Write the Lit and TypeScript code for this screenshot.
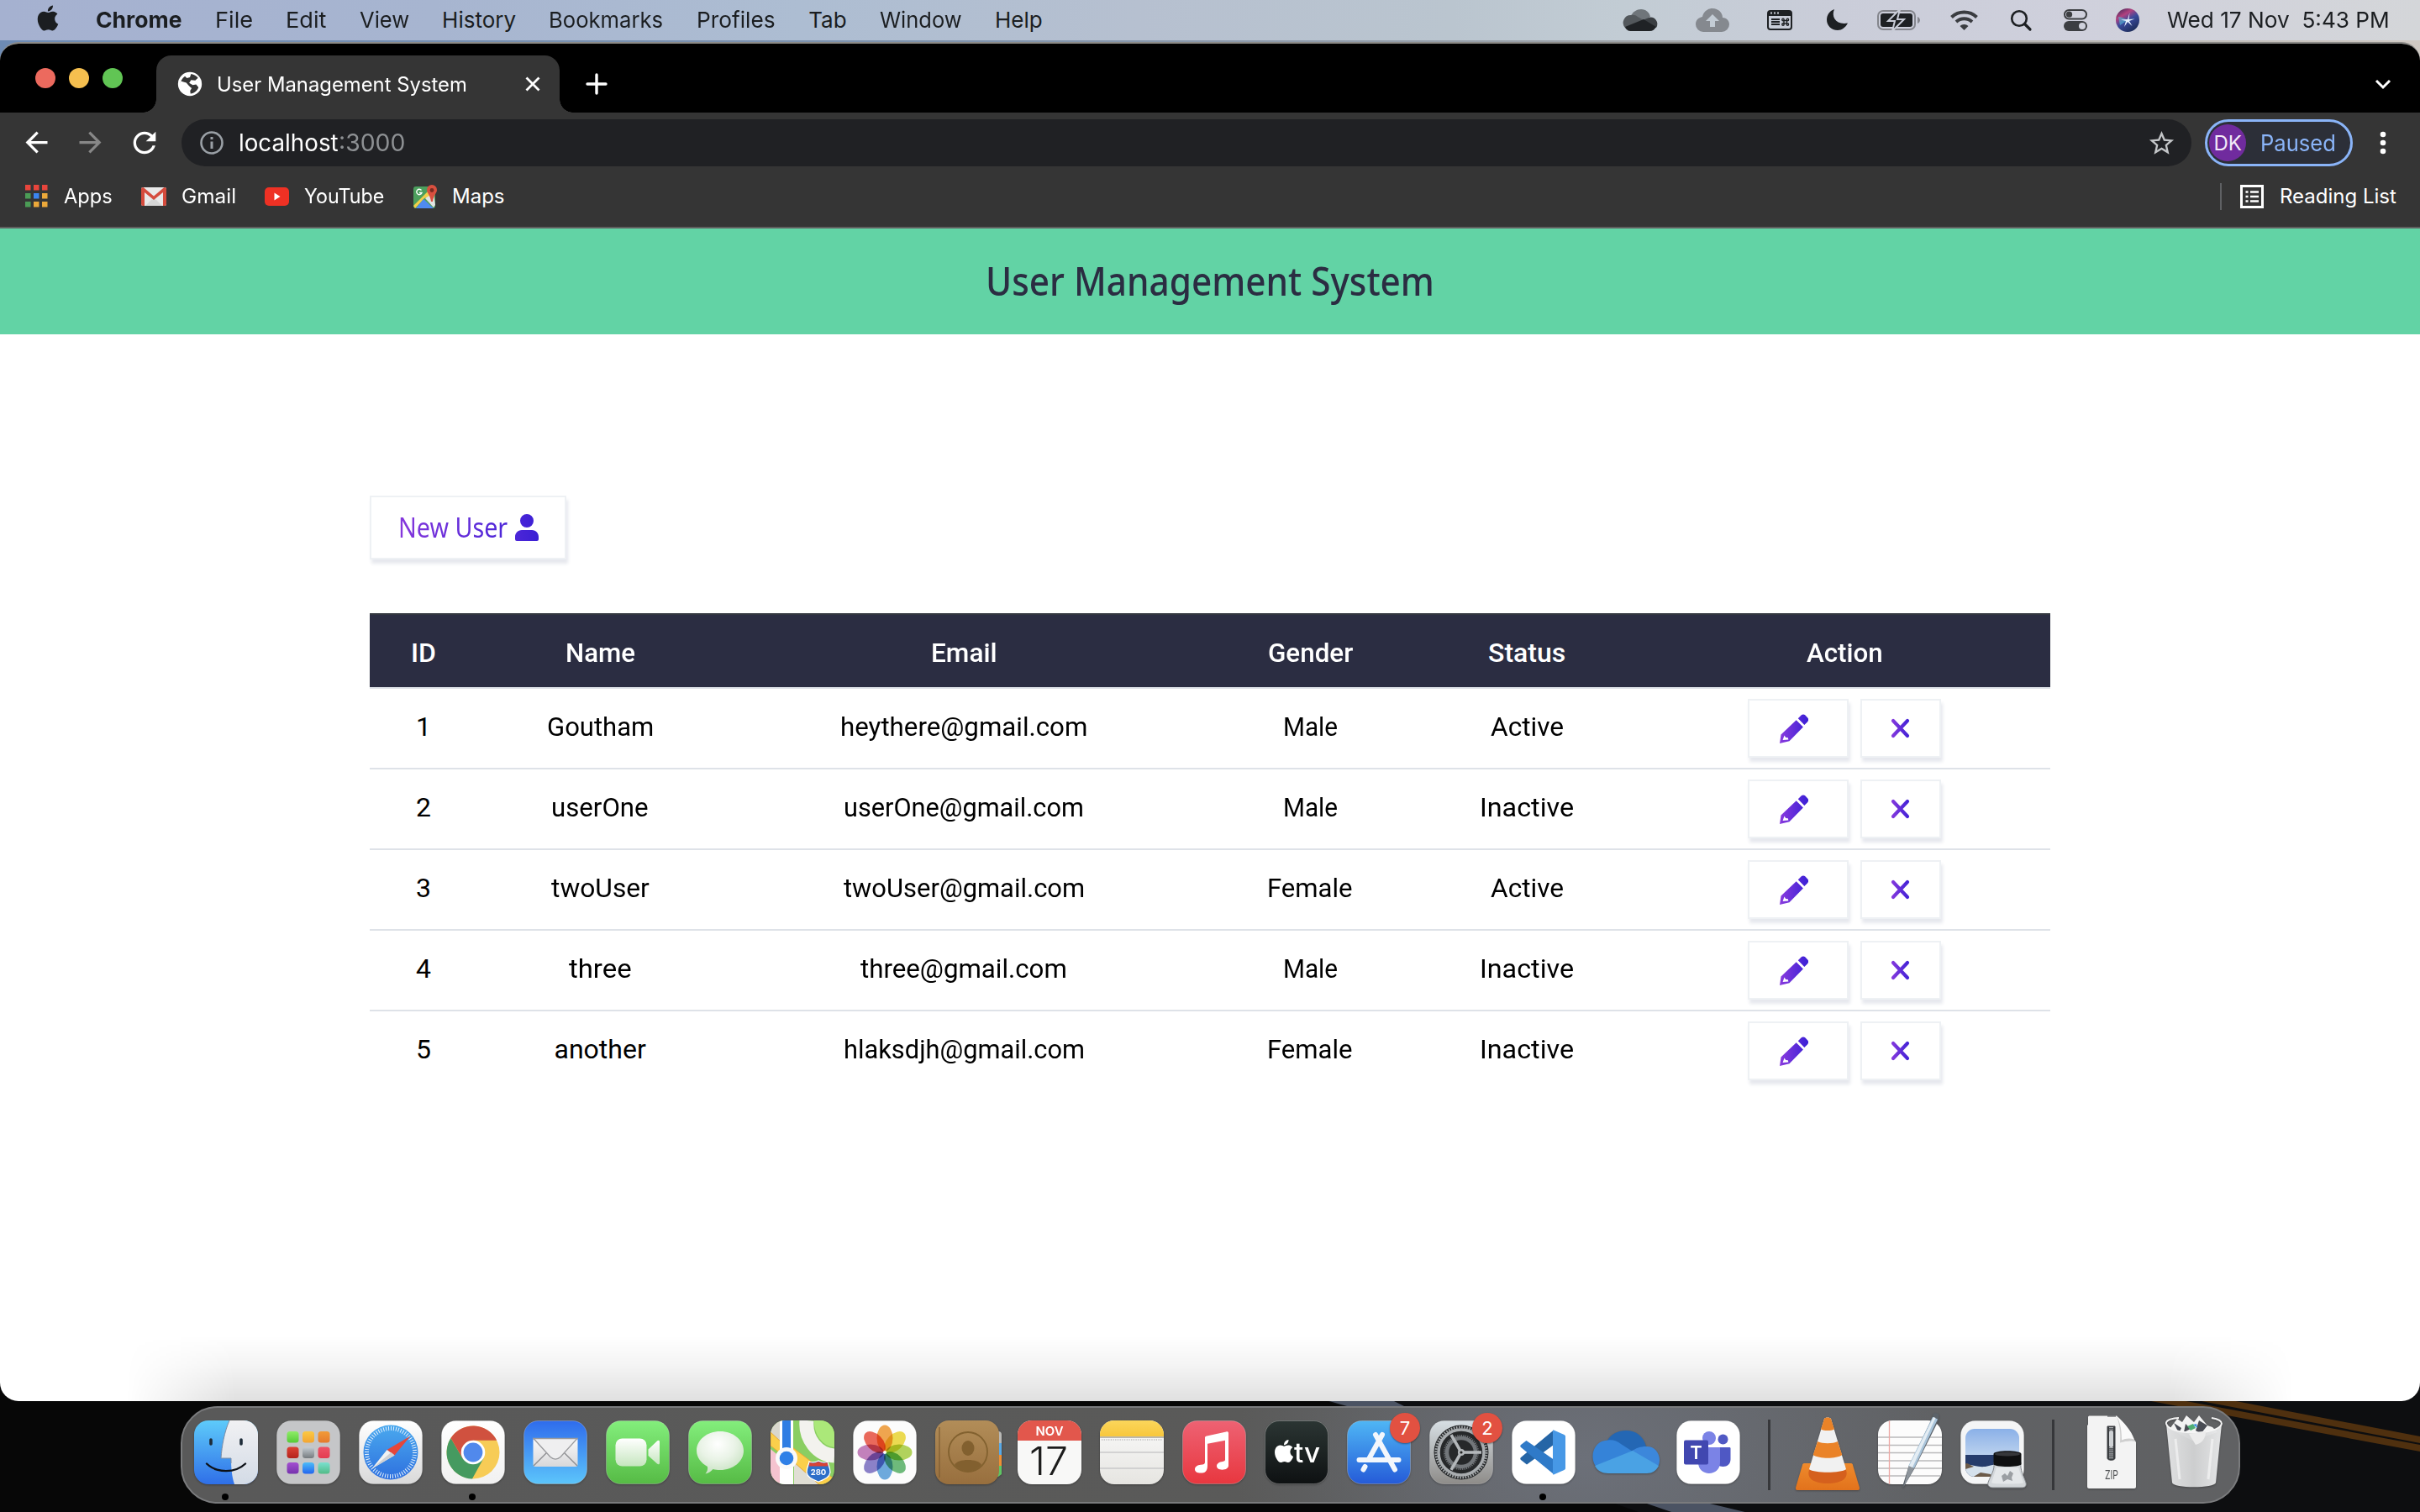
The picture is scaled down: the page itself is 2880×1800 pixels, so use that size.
import { LitElement, html, svg, css } from "lit";
import { customElement, property } from "lit/decorators.js";

/* Text scaled horizontally so that it fills exactly the given width. */
@customElement("fit-text")
class FitText extends LitElement {
  @property({ type: Number }) w = 0;
  static styles = css`
    :host { display: inline-block; white-space: pre; flex: none; text-align: left; }
    span { display: inline-block; transform-origin: 0 50%; }
  `;
  render() {
    return html`<span part="t"><slot @slotchange=${this.fit}></slot></span>`;
  }
  fit = () => {
    const t = this.renderRoot.querySelector("span") as HTMLElement;
    if (!this.w || !t) return;
    this.style.width = this.w + "px";
    const natural = t.offsetWidth;
    if (natural) t.style.transform = `scaleX(${this.w / natural})`;
  };
  firstUpdated() {
    this.fit();
    document.fonts.ready.then(this.fit);
  }
}

const applePath = svg`<path d="M12.152 6.896c-.948 0-2.415-1.078-3.96-1.04-2.04.027-3.91 1.183-4.961 3.014-2.117 3.675-.546 9.103 1.519 12.09 1.013 1.454 2.208 3.09 3.792 3.039 1.52-.065 2.09-.987 3.935-.987 1.831 0 2.35.987 3.96.948 1.637-.026 2.676-1.48 3.676-2.948 1.156-1.688 1.636-3.325 1.662-3.415-.039-.013-3.182-1.221-3.22-4.857-.026-3.04 2.48-4.494 2.597-4.559-1.429-2.09-3.623-2.324-4.39-2.376-2-.156-3.675 1.09-4.61 1.09zM15.53 3.83c.843-1.012 1.4-2.427 1.245-3.83-1.207.052-2.662.805-3.532 1.818-.78.896-1.454 2.338-1.273 3.714 1.338.104 2.715-.688 3.559-1.701"/>`;

/* ---------- macOS menu bar ---------- */
@customElement("menu-bar")
class MenuBar extends LitElement {
  static styles = css`
    :host { display: flex; height: 48px; line-height: 48px; font: 400 26px/48px Inter, "Liberation Sans", sans-serif; color: #1b1e21;
      background: linear-gradient(90deg, #a5b1d0 0%, #a7b5d0 18%, #adbdd2 33%, #b6c0d0 47%, #bac5cf 60%, #c2ccd4 67%, #cacdd9 76%, #cfd0dc 86%, #d4d6d9 100%); }
    svg { display: block; overflow: visible; }
    .apple { padding: 6px 41.5px 0 42px; }
    .menus { display: flex; gap: 39.4px; flex: 1; }
    .bold { font-weight: 700; }
    .tray { display: grid; align-items: center; height: 48px; padding-right: 36px;
      grid-template-columns: 86px 85px 71px 60px 87px 72px 63px 62px 61px auto; }
  `;
  render() {
    const menus: [string, number][] = [["File", 45], ["Edit", 48], ["View", 59], ["History", 88], ["Bookmarks", 136], ["Profiles", 94], ["Tab", 45], ["Window", 98], ["Help", 57]];
    return html`
      <div class="apple"><svg width="30" height="31" viewBox="0 0 24 24" fill="#1b1e21">${applePath}</svg></div>
      <div class="menus">
        <fit-text class="bold" .w=${103}>Chrome</fit-text>
        ${menus.map(([t, w]) => html`<fit-text .w=${w}>${t}</fit-text>`)}
      </div>
      <div class="tray">
        <svg width="40" height="26" viewBox="0 0 40 26">
          <path d="M9 8C11 3 16 0 21 0c6 0 10 4 11 9l-9 5z" fill="#6f757a"/>
          <path d="M9 26a9 9 0 0 1-7-4 9 9 0 0 1 7-15c3-.5 6 0 8 2l7 4-20 11z" fill="#53585c"/>
          <path d="M30 10a8 8 0 0 1 9 12l-16-9z" fill="#3a3e42"/>
          <path d="M2 21l22-9 15 9c-2 3-4 5-8 5H10c-4 0-6-1-8-5z" fill="#1f2225"/>
        </svg>
        <svg width="40" height="28" viewBox="0 0 40 28">
          <path d="M9 28A9 9 0 0 1 0 19c0-5 3-8 8-9C9 4 14 0 20 0c7 0 12 5 12 11 5 0 8 4 8 8a9 9 0 0 1-9 9z" fill="#85898f"/>
          <path d="M20 7l8 8h-5v7h-6v-7h-5z" fill="#c3ccd5"/>
        </svg>
        <svg width="30" height="24" viewBox="0 0 30 24">
          <rect x="1" y="1" width="28" height="22" rx="3" fill="none" stroke="#1e2124" stroke-width="2"/>
          <path d="M1 2h28v5H1z" fill="#1e2124"/>
          <path d="M4 3.5h2M8 3.5h2M12 3.5h2" stroke="#cbd0d8" stroke-width="2"/>
          <path d="M5 11h10M5 14h10M5 17h10" stroke="#1e2124" stroke-width="1.8"/>
          <g fill="none" stroke="#1e2124" stroke-width="1.4"><rect x="20" y="12.5" width="3.4" height="3.4"/><circle cx="19" cy="11.5" r="1.2"/><circle cx="24.4" cy="11.5" r="1.2"/><circle cx="19" cy="17" r="1.2"/><circle cx="24.4" cy="17" r="1.2"/></g>
        </svg>
        <svg width="26" height="26" viewBox="0 0 26 26"><path d="M9 0C5 9 11 19 25 16.500 22 22 18 25 13 25 5 25 0 19 0 12.500 0 7 3 2 9 0z" fill="#1d2023"/></svg>
        <svg width="51" height="24" viewBox="0 0 51 24">
          <rect x="1" y="1" width="44" height="22" rx="6" fill="none" stroke="#84868d" stroke-width="2"/>
          <rect x="4" y="4" width="38" height="16" rx="3" fill="#1d2023"/>
          <path d="M48 8c2 1 3 2.500 3 4s-1 3-3 4z" fill="#84868d"/>
          <path d="M27-1L13 13h8l-3 12 14-14h-8z" fill="#1d2023" stroke="#c8ccd7" stroke-width="2"/>
        </svg>
        <svg width="33" height="24" viewBox="0 0 33 24" fill="none" stroke-linecap="butt">
          <path d="M1.500 8.500a22 22 0 0 1 30 0" stroke="#3a3c40" stroke-width="4"/>
          <path d="M7 14a14 14 0 0 1 19 0" stroke="#3a3c40" stroke-width="4"/>
          <path d="M16.500 24l-5-5a7 7 0 0 1 10 0z" fill="#3a3c40"/>
        </svg>
        <svg width="24" height="24" viewBox="0 0 24 24" fill="none" stroke="#1d2023" stroke-width="2.600" stroke-linecap="round"><circle cx="10" cy="10" r="8.800"/><path d="M16.500 16.500l6.500 6.500" stroke-width="3.200"/></svg>
        <svg width="28" height="26" viewBox="0 0 28 26">
          <rect x="1" y="1" width="26" height="10.500" rx="5.200" fill="none" stroke="#3c3e42" stroke-width="2"/><circle cx="6.500" cy="6.200" r="3.600" fill="#3c3e42"/>
          <rect x="0" y="14" width="28" height="12" rx="6" fill="#3c3e42"/><circle cx="22" cy="20" r="4" fill="#cfd1dc"/>
        </svg>
        <svg width="28" height="28" viewBox="0 0 28 28">
          <defs><linearGradient id="si" x1="0" y1="0" x2=".6" y2="1"><stop offset="0" stop-color="#2b2350"/><stop offset=".35" stop-color="#b1417f"/><stop offset=".6" stop-color="#3a4a9c"/><stop offset="1" stop-color="#1f2f5e"/></linearGradient></defs>
          <circle cx="14" cy="14" r="14" fill="url(#si)"/>
          <path d="M3 10c4 0 7 2 11 4l-9 6z" fill="#4cc4e0" opacity=".55"/><path d="M14 13L16.500 5l-1 8 7-.5-6.500 2.500 3.500 6-5.500-5-4 6 2-7-6-1.500z" fill="#e8f3ff"/>
        </svg>
        <fit-text .w=${265}>Wed 17 Nov  5:43 PM</fit-text>
      </div>`;
  }
}

/* ---------- Chrome tab strip, toolbar, bookmarks ---------- */
@customElement("browser-chrome")
class BrowserChrome extends LitElement {
  static styles = css`
    :host { display: block; font-family: Inter, "Liberation Sans", sans-serif; color: #fff; }
    svg { display: block; flex: none; overflow: visible; }
    .strip { height: 82px; background: #000; display: flex; align-items: flex-end; }
    .lights { display: flex; gap: 16px; padding: 0 40px 29px 42px; }
    .lights i { width: 24px; height: 24px; border-radius: 50%; }
    .r { background: #ec6a5e; } .y { background: #f5bf4f; } .g { background: #61c554; }
    .tab { position: relative; width: 480px; height: 68px; background: #353535; border-radius: 18px 18px 0 0; display: flex; align-items: center; box-sizing: border-box; padding: 0 23px 0 23px; font-size: 24px; }
    .tab::before, .tab::after { content: ""; position: absolute; bottom: 0; width: 16px; height: 16px; }
    .tab::before { left: -16px; background: radial-gradient(circle at 0 0, #000 15.500px, #353535 16px); }
    .tab::after { right: -16px; background: radial-gradient(circle at 100% 0, #000 15.500px, #353535 16px); }
    .tab fit-text { margin: 0 auto 0 15px; }
    .plus { margin: 0 auto 22px 32px; }
    .down { margin: 0 35px 29px 0; }
    .tools { height: 72px; background: #353535; display: flex; align-items: center; }
    .nav { display: flex; gap: 25px; padding-left: 24px; width: 192px; }
    .omni { width: 2392px; height: 56px; border-radius: 28px; background: #202124; display: flex; align-items: center; box-sizing: border-box; padding: 0 18px 0 22px; font-size: 28px; }
    .omni .url { margin-left: 18px; }
    .omni .port { color: #8d9093; margin-right: auto; }
    .pill { margin-left: 16px; width: 176px; height: 56px; box-sizing: border-box; border: 3px solid #8ab4f8; border-radius: 28px; background: #2c2f38; display: flex; align-items: center; padding-left: 2px; color: #8ab4f8; font-size: 27px; }
    .avatar { width: 44px; height: 44px; border-radius: 50%; background: #702b9e; color: #f3eaf8; display: flex; align-items: center; justify-content: center; font-size: 24px; margin-right: 17px; }
    .dots { margin-left: 33px; }
    .marks { height: 66px; box-sizing: border-box; padding: 0 28px 9px 30px; background: #353535; border-bottom: 2px solid #5f5f5f; display: flex; align-items: center; font-size: 24px; }
    .m { display: flex; align-items: center; }
    .m1 { gap: 19px; width: 138px; } .m2 { gap: 18px; width: 147px; } .m3 { gap: 18px; width: 177px; } .m4 { gap: 18px; }
    .sep { width: 2px; height: 32px; background: #5f6164; margin: 0 22px 0 auto; }
    .rl { gap: 19px; }
  `;
  render() {
    const c = ["#e8453c", "#e8453c", "#e8453c", "#4b9c56", "#3b85f1", "#eba83a", "#4b9c56", "#eba83a", "#eba83a"];
    return html`
      <div class="strip">
        <div class="lights"><i class="r"></i><i class="y"></i><i class="g"></i></div>
        <div class="tab">
          <svg width="34" height="34" viewBox="0 0 24 24"><circle cx="12" cy="12" r="10" fill="#fff"/><path d="M13 3.500c2.500.5 4.500 1.600 5.800 3.300L16.500 9 13 8.600l-1.600 2.600 3 1.600 2.800-.4 2 2.400c-1 2.700-3.400 5-6.700 5.400l-.3-2.600 1.300-2-2-1.600-3.700-.1L4 11c.6-2 1.700-4 3.800-5.500L9.500 7l2.500-.6z" fill="#353535"/><path d="M4.200 9.600L9 11l3 3.500-1 5.300C6 19.500 3 15 4.200 9.600z" fill="#fff"/></svg>
          <fit-text .w=${298}>User Management System</fit-text>
          <svg width="18" height="18" viewBox="0 0 18 18" stroke="#fff" stroke-width="2.800"><path d="M1.500 1.500l15 15M16.500 1.500l-15 15"/></svg>
        </div>
        <svg class="plus" width="24" height="24" viewBox="0 0 24 24" stroke="#fff" stroke-width="3.400" stroke-linecap="round"><path d="M12 1v22M1 12h22"/></svg>
        <svg class="down" width="18" height="10" viewBox="0 0 18 10" fill="none" stroke="#fff" stroke-width="3"><path d="M1 1l8 8 8-8"/></svg>
      </div>
      <div class="tools">
        <div class="nav">
          <svg width="39" height="39" viewBox="0 0 24 24" fill="#fff"><path d="M20 11H7.830l5.590-5.590L12 4l-8 8 8 8 1.410-1.410L7.830 13H20z"/></svg>
          <svg width="39" height="39" viewBox="0 0 24 24" fill="#878787"><path d="M12 4l-1.410 1.410L16.170 11H4v2h12.170l-5.580 5.590L12 20l8-8z"/></svg>
          <svg width="40" height="40" viewBox="0 0 24 24" fill="#fff"><path d="M17.650 6.350C16.200 4.900 14.210 4 12 4c-4.420 0-7.990 3.580-7.990 8s3.570 8 7.990 8c3.730 0 6.840-2.550 7.730-6h-2.080c-.82 2.330-3.040 4-5.650 4-3.310 0-6-2.690-6-6s2.690-6 6-6c1.660 0 3.140.69 4.220 1.780L13 11h7V4z"/></svg>
        </div>
        <div class="omni">
          <svg width="28" height="28" viewBox="0 0 28 28"><circle cx="14" cy="14" r="12.500" fill="none" stroke="#9aa0a6" stroke-width="2.600"/><path d="M14 12.500V21M14 7v3" stroke="#9aa0a6" stroke-width="3"/></svg>
          <fit-text class="url" .w=${119}>localhost</fit-text><fit-text class="port" .w=${79}>:3000</fit-text>
          <svg width="35" height="35" viewBox="0 0 24 24" fill="#c4c6c8"><path d="M22 9.240l-7.190-.62L12 2 9.190 8.630 2 9.240l5.460 4.730L5.820 21 12 17.270 18.180 21l-1.630-7.030zM12 15.400l-3.760 2.270 1-4.280-3.320-2.880 4.380-.38L12 6.100l1.710 4.040 4.380.38-3.320 2.880 1 4.280z"/></svg>
        </div>
        <div class="pill"><span class="avatar"><fit-text .w=${33}>DK</fit-text></span><fit-text .w=${90}>Paused</fit-text></div>
        <svg class="dots" width="6" height="28" viewBox="0 0 6 28" fill="#fff"><circle cx="3" cy="4" r="3.300"/><circle cx="3" cy="14" r="3.300"/><circle cx="3" cy="24" r="3.300"/></svg>
      </div>
      <div class="marks">
        <div class="m m1"><svg width="27" height="27" viewBox="0 0 27 27">${c.map((f, i) => svg`<rect x=${(i % 3) * 10} y=${Math.floor(i / 3) * 10} width="6.500" height="6.500" fill=${f}></rect>`)}</svg><fit-text .w=${58}>Apps</fit-text></div>
        <div class="m m2"><svg width="30" height="22" viewBox="0 0 30 22"><rect width="30" height="22" rx="2" fill="#e9e9e9"/><path d="M5 22l10-10 10 10z" fill="#d6d6d6"/><path d="M0 2a2 2 0 0 1 3.500-1.300L15 10.500 26.500.7A2 2 0 0 1 30 2v18a2 2 0 0 1-2 2h-2V6L15 15 4 6v16H2a2 2 0 0 1-2-2z" fill="#d54b3d"/></svg><fit-text .w=${65}>Gmail</fit-text></div>
        <div class="m m3"><svg width="29" height="22" viewBox="0 0 29 22"><rect width="29" height="22" rx="5" fill="#ee3124"/><path d="M11.500 6.500l7 4.500-7 4.500z" fill="#fff"/></svg><fit-text .w=${95}>YouTube</fit-text></div>
        <div class="m m4"><svg width="28" height="28" viewBox="0 0 28 28"><rect y="2" width="26" height="26" rx="3" fill="#4c9f5d"/><path d="M0 25L19 6l6 6-12 4L2 28z" fill="#f2cf4a"/><path d="M14 16l10-6 2 14-2 3z" fill="#e4e4e4"/><path d="M12 17l12 11H3z" fill="#4f8af0"/><path d="M22 0a6 6 0 0 1 6 6c0 4-4 6-5 14h-2C20 12 16 10 16 6a6 6 0 0 1 6-6z" fill="#d8503f"/><circle cx="22" cy="6.500" r="2.400" fill="#7a2a20"/><path d="M9.500 6.500a3.200 3.200 0 1 0 .5 3H7" fill="none" stroke="#fff" stroke-width="1.400"/></svg><fit-text .w=${63}>Maps</fit-text></div>
        <i class="sep"></i>
        <div class="m rl"><svg width="28" height="28" viewBox="0 0 28 28" fill="none" stroke="#fff"><rect x="1.500" y="1.500" width="25" height="25" stroke-width="3"/><path d="M6.500 8.500h3M6.500 14h3M6.500 19.500h3M12 8.500h10M12 14h10M12 19.500h10" stroke-width="2.400"/></svg><fit-text .w=${139}>Reading List</fit-text></div>
      </div>`;
  }
}

/* ---------- the web page ---------- */
interface User { id: number; name: string; email: string; gender: string; status: string; }
const users: User[] = [
  { id: 1, name: "Goutham", email: "heythere@gmail.com", gender: "Male", status: "Active" },
  { id: 2, name: "userOne", email: "userOne@gmail.com", gender: "Male", status: "Inactive" },
  { id: 3, name: "twoUser", email: "twoUser@gmail.com", gender: "Female", status: "Active" },
  { id: 4, name: "three", email: "three@gmail.com", gender: "Male", status: "Inactive" },
  { id: 5, name: "another", email: "hlaksdjh@gmail.com", gender: "Female", status: "Inactive" },
];
/* Advance widths of the table's words, in pixels. */
const widths: Record<string, number> = {
  Goutham: 127, userOne: 116, twoUser: 117, three: 75, another: 109,
  "heythere@gmail.com": 294, "userOne@gmail.com": 286, "twoUser@gmail.com": 287, "three@gmail.com": 246, "hlaksdjh@gmail.com": 287,
  Male: 65, Female: 102, Active: 87, Inactive: 112,
  ID: 30, Name: 83, Email: 79, Gender: 101, Status: 92, Action: 91,
};
const word = (t: string) => html`<fit-text .w=${widths[t] ?? 0}>${t}</fit-text>`;

@customElement("user-page")
class UserPage extends LitElement {
  static styles = css`
    :host { display: block; background: #fff; font: 400 32px/38px Roboto, "Liberation Sans", sans-serif; color: #000; }
    svg { display: block; flex: none; }
    header { height: 126px; box-sizing: border-box; padding-bottom: 3px; background: #62d3a5; display: flex; align-items: center; justify-content: center; font: 500 48px/60px "Noto Sans", "Open Sans", sans-serif; color: #2b2d42; }
    main { width: 2000px; margin: 0 auto; padding-top: 192px; }
    .btn { box-sizing: border-box; border: 2px solid #eef1f4; background: #fff; box-shadow: 2px 5px 4px #e6e8ee; display: flex; align-items: center; }
    .new { width: 234px; height: 76px; padding: 0 31px 0 32px; justify-content: space-between; font: 400 32px/40px "Noto Sans", "Open Sans", sans-serif; }
    .new fit-text::part(t) { background: linear-gradient(90deg, #8638dc, #4c26d8); -webkit-background-clip: text; background-clip: text; color: transparent; }
    .grid { margin-top: 64px; }
    .row { display: grid; grid-template-columns: 128px 292px 574px 250px 266px 490px; height: 96px; box-sizing: border-box; border-top: 2px solid #dee2e8; text-align: center; }
    .row > div { display: flex; align-items: center; justify-content: center; padding-bottom: 4px; }
    .head { height: 88px; border-top-color: #333740; background: #2b2d42; color: #fff; font-weight: 500; }
    .head > div { padding: 4px 0 0; }
    .row > .act { justify-content: flex-start; align-items: flex-start; padding: 12px 0 0 130px; gap: 14px; }
    .edit { width: 120px; height: 70px; padding-left: 36px; }
    .del { width: 96px; height: 70px; padding-left: 34px; }
  `;
  render() {
    return html`
      <header><fit-text .w=${534}>User Management System</fit-text></header>
      <main>
        <div class="btn new"><fit-text .w=${130}>New User</fit-text>
          <svg width="28" height="32" viewBox="0 0 28 32"><defs><linearGradient id="u"><stop stop-color="#4c26d8"/><stop offset="1" stop-color="#3a1fd4"/></linearGradient></defs><path d="M14 0a8 8 0 1 1 0 16 8 8 0 0 1 0-16zM8 19h12c5 0 8 4 8 8v3a2 2 0 0 1-2 2H2a2 2 0 0 1-2-2v-3c0-4 3-8 8-8z" fill="url(#u)"/></svg>
        </div>
        <div class="grid">
          <div class="row head">${["ID", "Name", "Email", "Gender", "Status", "Action"].map((h) => html`<div>${word(h)}</div>`)}</div>
          ${users.map((u) => html`<div class="row">
            <div>${u.id}</div><div>${word(u.name)}</div><div>${word(u.email)}</div><div>${word(u.gender)}</div><div>${word(u.status)}</div>
            <div class="act">
              <div class="btn edit"><svg width="34" height="35" viewBox="0 0 34 35"><defs><linearGradient id="p"><stop stop-color="#8a3bdd"/><stop offset="1" stop-color="#3a1fd6"/></linearGradient></defs><path d="M21.800 5.300L25.500 1.400a4 4 0 0 1 5 0L33 4.200a4 4 0 0 1 0 5.300L29.300 13zM19.700 7.200l8.200 8.200L11.500 32.200 0 35 1.500 24.500zM5.500 25.500L3.600 31l6.800-.6-.6-2.200-2.600-.2z" fill="url(#p)" fill-rule="evenodd"/></svg></div>
              <div class="btn del"><svg width="24" height="24" viewBox="0 0 24 24"><defs><linearGradient id="x" gradientUnits="userSpaceOnUse" x1="0" y1="0" x2="24" y2="0"><stop stop-color="#8a3bdd"/><stop offset="1" stop-color="#3a1fd6"/></linearGradient></defs><path d="M3 3l17 18M20 3L3 21" stroke="url(#x)" stroke-width="4.200" stroke-linecap="round"/></svg></div>
            </div>
          </div>`)}
        </div>
      </main>`;
  }
}

/* ---------- Dock ---------- */
const tile = (fill: string) => svg`<rect x=".5" y=".5" width="75" height="75" rx="17" fill=${fill} stroke="#fff" stroke-opacity=".25"/>`;
const grad = (id: string, a: string, b: string) => svg`<linearGradient id=${id} x1="0" y1="0" x2="0" y2="1"><stop stop-color=${a}></stop><stop offset="1" stop-color=${b}></stop></linearGradient>`;

const finder = svg`<defs>${grad("f1", "#5ecbfa", "#2f6fe8")}${grad("f2", "#f1f1f3", "#d3dbe6")}<clipPath id="fc"><rect width="76" height="76" rx="17"/></clipPath></defs>
  <g clip-path="url(#fc)"><rect width="76" height="76" fill="url(#f1)"/><path d="M42 0C36 14 33 30 32 45h12c0 12 1 22 4 31h28V0z" fill="url(#f2)"/></g>
  <path d="M42 0C36 14 33 30 32 45h12v6" fill="none" stroke="#7c8ea6" stroke-width="1"/>
  <path d="M20 23v5M56 23v5" stroke="#1d2b38" stroke-width="3.600" stroke-linecap="round"/><path d="M15 51.500c12 11.500 34 11.500 46 0" fill="none" stroke="#0d1117" stroke-width="2.400" stroke-linecap="round"/>`;
const padColors = [["#8fec68", "#55cb37"], ["#fbc944", "#f3a532"], ["#f19b38", "#e57a2e"], ["#dd4135", "#b4221b"], ["#c5cdd3", "#757a7e"], ["#ee5468", "#e33c50"], ["#a34fd0", "#7633ad"], ["#4dbcf8", "#2265ee"], ["#7be0cf", "#51bb87"]];
const launchpad = svg`<defs>${padColors.map((c, i) => grad("lp" + i, c[0], c[1]))}</defs>${tile("#c5c6c8")}
  ${padColors.map((_, i) => svg`<rect x=${12.500 + (i % 3) * 18.500} y=${13 + Math.floor(i / 3) * 18.500} width="14" height="13.500" rx="3.500" fill=${`url(#lp${i})`}></rect>`)}`;
const safari = svg`<defs>${grad("s0", "#fff", "#d9d9d9")}${grad("s1", "#4aa9ee", "#2e70df")}</defs>${tile("url(#s0)")}<circle cx="38" cy="38" r="32.500" fill="url(#s1)"/>
  <circle cx="38" cy="38" r="28.500" fill="none" stroke="#e4f1fd" stroke-width="5" stroke-dasharray="1 1.980"/>
  <path d="M61.500 18.500L42.500 41.500 33.500 35z" fill="#e5463a"/><path d="M15.500 57.500l18-22.500 9 6.500z" fill="#f2f2f2"/><path d="M15.500 57.500l23-19.500 4 3.500z" fill="#cfd0d3"/>`;
const chrome = svg`<defs>${grad("c0", "#fff", "#f1f1f1")}</defs>${tile("url(#c0)")}
  <circle cx="38" cy="38" r="31.500" fill="#f7cc56"/><path d="M11.500 21A31.500 31.500 0 0 0 37 69.500L50.400 45.200 38 38 25.600 45.200z" fill="#459a60"/><path d="M11.500 21A31.500 31.500 0 0 1 66.200 23.700H38L25.600 45.200z" fill="#d0513f"/>
  <circle cx="38" cy="38" r="14.300" fill="#fff"/><circle cx="38" cy="38" r="11.400" fill="#5189ec"/>`;
const mail = svg`<defs>${grad("m0", "#2f6cec", "#5cc5fb")}${grad("m1", "#fafafa", "#d8d8da")}</defs>${tile("url(#m0)")}
  <rect x="11.500" y="21" width="53" height="34" rx="2.500" fill="url(#m1)"/><path d="M12 54l17-17M64 54L47 37" stroke="#8c8d90" stroke-width="1.400"/><path d="M12 21.500l20 22c4 3.500 8 3.500 12 0l20-22z" fill="#efeff0" stroke="#9a9b9e" stroke-width="1.300"/>`;
const facetime = svg`<defs>${grad("t0", "#83ee7c", "#56bb45")}${grad("t1", "#fff", "#c6e6bf")}</defs>${tile("url(#t0)")}
  <rect x="11.500" y="21.500" width="37" height="33" rx="8" fill="url(#t1)"/><path d="M50.500 34.500L61 24.500c1.500-1.500 3-.8 3 1v25c0 1.800-1.500 2.500-3 1L50.500 42z" fill="url(#t1)"/>`;
const messages = svg`<defs><radialGradient id="g1" cx=".45" cy=".3" r=".75"><stop stop-color="#fff"/><stop offset=".5" stop-color="#e9f3e6"/><stop offset="1" stop-color="#c4e0bd"/></radialGradient></defs>${tile("url(#t0)")}
  <path d="M38 13c15.500 0 28 10 28 23S53.500 59 38 59c-3 0-6-.3-8.500-1-2 2.500-5.500 5-9 5.500 2-2.500 3-5 2.500-8.500C15.500 51 10 44 10 36c0-13 12.500-23 28-23z" fill="url(#g1)"/>`;
const maps = svg`<defs><clipPath id="mc"><rect width="76" height="76" rx="17"/></clipPath></defs><g clip-path="url(#mc)"><rect width="76" height="76" fill="#8ace62"/>
  <path d="M52 0a26 30 0 0 0 24 32V0z" fill="#abe879"/><path d="M43 0a35 38 0 0 0 33 42" fill="none" stroke="#f3f2ee" stroke-width="17"/><path d="M0 0h12v34L0 24z" fill="#d9d7cd"/><path d="M0 34l12 10v32H0z" fill="#f5c3cf"/><path d="M28 48l30 28H28z" fill="#e0ded4"/><path d="M0 14l13 12v14L0 30zM26 32l50 38v10H62L26 48z" fill="#fbcf4b" stroke="#e5a93a" stroke-width="1"/><rect x="11" width="16" height="76" fill="#fff"/><rect x="14" width="10" height="44" fill="#2f7de3"/></g>
  <circle cx="19" cy="45" r="13" fill="#fafafa"/><circle cx="19" cy="45" r="8.300" fill="#2f80e7"/><g><path d="M43 62c0-7 3-10 3-13 4 2 7 1 11-1 4 2 7 3 11 1 0 3 3 6 3 13-1 6-7 8-14 11-7-3-13-5-14-11z" fill="#2d6fc9" stroke="#fff" stroke-width="1.300"/><path d="M46.500 50c3.500 1.500 6.500.8 10.500-1 4 1.800 7 2.500 10.500 1l1 4.500h-23z" fill="#d94335"/><text x="57" y="65" text-anchor="middle" font-size="9.500" font-weight="700" fill="#fff">280</text></g>`;
const petals = ["#f19b37", "#ecd93a", "#a9cf46", "#5bb36a", "#5a9fdb", "#7d72c4", "#bd72b4", "#ea5545"];
const photos = svg`${tile("#fcfcfc")}${petals.map((c, i) => svg`<ellipse cx="38" cy="21" rx="9.500" ry="15.500" fill=${c} opacity=".88" style="mix-blend-mode:multiply" transform=${`rotate(${i * 45} 38 38)`}></ellipse>`)}<circle cx="38" cy="38" r="1.800" fill="#fff"/>`;
const contacts = svg`<defs>${grad("k0", "#b28d58", "#986f3e")}</defs><path d="M70 13h5a4 4 0 0 1 4 4v10h-9z" fill="#b9b9b6"/><path d="M70 27h9v14h-9z" fill="#58a9e6"/><path d="M70 41h9v13h-9z" fill="#ee8f34"/><path d="M70 54h9v10l-4 3h-5z" fill="#5fc563"/>
  <rect x="0" y="0" width="76" height="76" rx="16" fill="url(#k0)"/><path d="M5 8v60" stroke="#7d5c31" stroke-width="1.200"/><ellipse cx="39" cy="37.500" rx="23" ry="23.500" fill="none" stroke="#82612f" stroke-width="1.800"/><ellipse cx="39" cy="33" rx="7.500" ry="9" fill="#82602f"/><path d="M23 53c3-8 29-8 32 0-8 10-24 10-32 0z" fill="#82602f"/>`;
const calendar = svg`<defs><clipPath id="cc"><rect width="76" height="76" rx="17"/></clipPath></defs><g clip-path="url(#cc)"><rect width="76" height="76" fill="#f8f8f7"/><rect width="76" height="24" fill="#e2574c"/></g><text x="38" y="18" text-anchor="middle" font-size="15" font-weight="600" fill="#fff" textLength="33" lengthAdjust="spacingAndGlyphs">NOV</text><text x="37" y="64.500" text-anchor="middle" font-size="46" font-weight="300" fill="#1c1c1c" textLength="46" lengthAdjust="spacingAndGlyphs">17</text>`;
const notes = svg`<defs>${grad("n0", "#fbd65b", "#f8c73c")}${grad("n1", "#fafafa", "#e6e5e1")}<clipPath id="nc"><rect width="76" height="76" rx="17"/></clipPath></defs><g clip-path="url(#nc)"><rect width="76" height="76" fill="url(#n1)"/><rect width="76" height="19" fill="url(#n0)"/><path d="M0 20h76" stroke="#a9a494" stroke-width="1.600"/><path d="M0 38h76M0 57h76" stroke="#c9c9ca" stroke-width="1.300"/><path d="M2 23h72" stroke="#b9b9b9" stroke-width="1.600" stroke-dasharray="1.200 1.500"/></g>`;
const music = svg`<defs>${grad("u0", "#ee6273", "#e8373f")}</defs>${tile("url(#u0)")}<path d="M27 24.500c0-1.500.8-2.300 2.300-2.600l23-6.400c1.700-.3 2.700.5 2.700 2.200v48c0 4-3 6.500-7.500 6.500-4 0-6.500-2.200-6.500-5.500 0-4 3-6 7-6.700 2-.4 3-1 3-3V28.500l-21 5v32C30 74.500 27 77 22 77c-4.500 0-7-2-7-5.500 0-4 3-6 7-6.700 3.500-.7 5-1.500 5-4z" transform="translate(0 1) scale(1 .800)" fill="#fff"/>`;
const tv = svg`<defs>${grad("v0", "#2b3533", "#0e1112")}</defs>${tile("url(#v0)")}<g transform="translate(9.500 23) scale(1.130)" fill="#fff">${applePath}</g><text x="35" y="50" font-size="32" font-weight="500" fill="#fff" textLength="31" lengthAdjust="spacingAndGlyphs">tv</text>`;
const appstore = svg`<defs>${grad("a0", "#4fb6f5", "#255bd8")}</defs>${tile("url(#a0)")}<g stroke="#f3f7fc" stroke-width="6" stroke-linecap="round" fill="none"><path d="M34 17l23 41.500M42 17L26 46M21.500 55l-2 3.500M14.500 47h47"/></g>`;
const settings = svg`<defs>${grad("e0", "#d7dfe4", "#8e8c89")}</defs>${tile("url(#e0)")}<circle cx="38" cy="38" r="32.500" fill="#26282a"/><circle cx="38" cy="38" r="30" fill="none" stroke="#a4a8aa" stroke-width="3" stroke-dasharray="1.600 1.540"/><circle cx="38" cy="38" r="27" fill="none" stroke="#a9adb0" stroke-width="3.500"/><circle cx="38" cy="38" r="17" fill="none" stroke="#72767a" stroke-width="4.500"/><circle cx="38" cy="38" r="20" fill="none" stroke="#72767a" stroke-width="2" stroke-dasharray="1.200 1.200"/>
  <g stroke="#b3b7ba" stroke-width="3.600">${[0, 120, 240].map((a) => svg`<path d="M38 38h24" transform=${`rotate(${a} 38 38)`}></path>`)}</g><circle cx="38" cy="38" r="4" fill="#b3b7ba"/><circle cx="38" cy="38" r="1.600" fill="#222"/>`;
const vscode = svg`${tile("#fff")}<path d="M50 11.500L50 29 18 52.500l-7-5.500c-1-.8-1-2.200 0-3z" fill="#2565a6"/><path d="M50 64V46.500L17.500 24 11 29c-1 1-1 2 0 3z" fill="#2f7ac8"/><path d="M50 11.500l12.500 5.500c1 .5 1.500 1.300 1.500 2.300v37.500c0 1-.5 1.800-1.500 2.300L50 64.500c-.8 0-1-.5-1-1V12.500c0-.5.2-1 1-1z" fill="#4798e6"/>`;
const onedrive = svg`<path d="M16 24C20 16 29 12 38 12c12 0 21 7 24 19L44 42z" fill="#2467b4"/><path d="M1 53C-5 42 0 26 13 24c8-2 14 0 19 4l14 9-40 21z" fill="#3583d8"/><path d="M62 31c9-1 16 7 16 16 0 4-1 7-3 9L44 37c6-4 11-6 18-6z" fill="#3c87db"/><path d="M1 54l45-18 31 18c-3 6-8 9-14 9H17C10 63 4 60 1 54z" fill="#4aa2e4"/>`;
const teams = svg`${tile("#fff")}<circle cx="39" cy="21" r="8" fill="#7b83e6"/><circle cx="55.500" cy="22.500" r="6" fill="#5059c4"/><path d="M46 32h17c1 0 1.500.5 1.500 1.500V46c0 6-4 9-9 9s-9-3-9.500-9z" fill="#4f58c4"/><path d="M26 32h26v18c0 8-6 13-13 13s-13-5-13-13z" fill="#7b83e6"/><rect x="9" y="23.500" width="29" height="29" rx="2" fill="#4147b0"/><text x="23.500" y="46" text-anchor="middle" font-size="22" font-weight="600" fill="#fff">T</text>`;
const vlc = svg`<defs>${grad("w0", "#ee8a2c", "#e2721c")}</defs><path d="M8 53c0-1 1-2 2-2h56c1 0 2 1 2 2l8 27c0 2 0 3-2 3H2c-2 0-2-1-2-3z" fill="url(#w0)"/><path d="M16 59h44c3 9-4 16-22 16S13 68 16 59z" fill="#d5601d"/>
  <path d="M34-2c1-2 7-2 8 0l18 60c-6 5-38 5-44 0z" fill="#f1f1f1"/><path d="M34-2c1-2 7-2 8 0l4 12.500c-4 2-12 2-16 0zM26 25c6 3 18 3 24 0l5.300 16c-7 5-27 5-34.600 0z" fill="#ea8328"/>`;
const textedit = svg`<defs><clipPath id="xc"><rect width="76" height="76" rx="17"/></clipPath></defs><g clip-path="url(#xc)"><rect width="76" height="76" fill="#fcfcfc"/><path d="M0 20h76M0 29.500h76M0 38.500h76M0 48h76M0 57h76M0 66h76" stroke="#b9b9bb" stroke-width="1.300"/><path d="M13.500 0v76" stroke="#eda8a4" stroke-width="1.300"/></g>
  <path d="M66-8c2-1.500 6-.5 6.500 1.500L72 0 43 58 30 80l-1-1 7-23L63 0z" fill="#5b6269"/><path d="M65-4l6 2.500L43 57l-7-2.500z" fill="#a9c4da"/><path d="M66-4l2.500 1L40.500 57l-4-2z" fill="#e4edf4"/><path d="M36.500 54l6.500 3-12 21z" fill="#8d949b"/>`;
const preview = svg`<defs>${grad("z0", "#7ba6e6", "#bcd2ee")}<clipPath id="zc"><rect x="6" y="10" width="64" height="57" rx="11"/></clipPath></defs>${tile("#f4f5f6")}<g clip-path="url(#zc)"><rect width="76" height="42" fill="url(#z0)"/><rect y="41" width="76" height="35" fill="#263c6b"/><path d="M0 54c14-4 20 4 34 0s26 2 42-2v26H0z" fill="#d5e1ec"/><path d="M0 53l8-2 8 4-10 3zM14 68l10-6 12 2 4 6-10 6z" fill="#6b5a49"/></g>
  <path d="M40 50c1 10-4 15-7 24-1 4 2 6 6 6h34c4 0 6-2 5-6-3-9-7-14-6-24z" fill="#d3d7da" stroke="#83878b"/><path d="M43 56h26l6 18c0 2-38 2-38 0z" fill="#e4e7e9"/><path d="M49 66l4-3 3 3 3-6 4 3-2 5 1 4-6-2-5 3z" fill="#9b9fa3"/><path d="M39.500 40c0-5 33-5 33 0v12c0 4-33 4-33 0z" fill="#0f1011"/><ellipse cx="56" cy="40" rx="15" ry="2.600" fill="#36373a"/>`;
const zip = svg`<path d="M10 5V-4c0-1 1-1.500 2-1.500h32L67 26v53c0 1-1 2-2 2H11c-1 0-2-1-2-2V6z" fill="#f3f3f3"/><path d="M44-5.500l23 31c-5-2-12-1-19 1 1-10 0-20-4-32z" fill="#cfcfcf"/><path d="M44-5.500c9 8 17 17 21 28-6-2-11-1-15 1 0-10-1-20-6-29z" fill="#fafafa"/>
  <path d="M33-5h10M33 7h9v38c0 3-9 3-9 0z" fill="#3a3d40" stroke="#3a3d40"/><path d="M37.500 8v38" stroke="#a9acaf" stroke-width="5" stroke-dasharray="1.200 1.200"/><rect x="35" y="12" width="5" height="20" rx="2.500" fill="#cfd2d5"/><text x="38" y="70" text-anchor="middle" font-size="15" fill="#505254" textLength="16" lengthAdjust="spacingAndGlyphs">ZIP</text>`;
const trash = svg`<defs><linearGradient id="h0"><stop stop-color="#e6e7e8"/><stop offset=".5" stop-color="#d2d3d4"/><stop offset="1" stop-color="#eaebec"/></linearGradient></defs><path d="M9 10L18-2l6 4 5-8 9 8 6-8 10 12 6 2 6 6-30 10z" fill="#f3f3f3"/><path d="M14 3l9 6-3 6zM44 0l10 6-8 10-6-4zM28 4l6 6-8 4z" fill="#4a4d55"/><path d="M30 7l7-3 3 5-6 3z" fill="#4fae74"/><path d="M37 5l4-1 1 5z" fill="#3b8fe0"/>
  <path d="M5 4c4 14 62 14 66 0l-7 70c-1 7-51 7-52 0z" fill="url(#h0)" fill-opacity=".96"/><path d="M5 4C4-1 14-3 20-3M71 4c0-4-6-6-12-7M5 4c4 14 62 14 66 0" fill="none" stroke="#f5f5f5" stroke-width="2"/><path d="M16 22l5 48M60 22l-5 48" stroke="#fafafa" stroke-width="3" opacity=".6"/><path d="M32 16l20-3c0 8-4 14-12 16z" fill="#ececec"/>`;

interface App { icon: unknown; dot?: boolean; badge?: string; }
@customElement("app-dock")
class AppDock extends LitElement {
  static styles = css`
    :host { display: flex; box-sizing: border-box; width: 2451px; height: 116px; border: 2px solid #7a7b7d; border-radius: 44px; padding: 15px 0 0 14px; gap: 22px;
      background: radial-gradient(ellipse 420px 260px at 1670px 60px, #6c7079, rgba(98, 99, 101, 0)) , linear-gradient(90deg, #595959, #5a5a59 55%, #606265 75%, #606163); font-family: Inter, "Liberation Sans", sans-serif; }
    .app { position: relative; width: 76px; height: 76px; flex: none; }
    svg { display: block; overflow: visible; filter: drop-shadow(0 1.500px 1px rgba(0, 0, 0, 0.3)); }
    .dot { position: absolute; left: 33px; top: 87px; width: 8px; height: 8px; border-radius: 50%; background: #000; }
    .badge { position: absolute; left: 51px; top: -9.500px; width: 36px; height: 36px; border-radius: 50%; background: #e25141; box-shadow: 0 1px 2px rgba(0, 0, 0, 0.4); color: #fff; font-size: 22px; line-height: 37px; text-align: center; }
    .sep { width: 3px; height: 84px; margin: -1px 8.500px 0 10.500px; background: #36373a; flex: none; }
  `;
  render() {
    const a = (x: App) => html`<div class="app"><svg width="76" height="76" viewBox="0 0 76 76">${x.icon}</svg>${x.dot ? html`<i class="dot"></i>` : ""}${x.badge ? html`<span class="badge">${x.badge}</span>` : ""}</div>`;
    const main: App[] = [{ icon: finder, dot: true }, { icon: launchpad }, { icon: safari }, { icon: chrome, dot: true }, { icon: mail }, { icon: facetime }, { icon: messages }, { icon: maps }, { icon: photos }, { icon: contacts }, { icon: calendar }, { icon: notes }, { icon: music }, { icon: tv }, { icon: appstore, badge: "7" }, { icon: settings, badge: "2" }, { icon: vscode, dot: true }, { icon: onedrive }, { icon: teams }];
    return html`${main.map(a)}<i class="sep"></i>${[vlc, textedit, preview].map((icon) => a({ icon }))}<i class="sep"></i>${[zip, trash].map((icon) => a({ icon }))}`;
  }
}

@customElement("app-root")
class AppRoot extends LitElement {
  static styles = css`
    :host { display: block; width: 2880px; height: 1800px; overflow: hidden; }
    .desktop { position: relative; display: flex; flex-direction: column; height: 1800px; background: #070707; }
    .sky { position: absolute; left: 0; right: 0; top: 48px; height: 40px; background: linear-gradient(90deg, #6d8bb4, #7f93ad 40%, #a9a9a8 75%, #cfc9c3); }
    .road { position: absolute; left: 0; top: 1640px; }
    menu-bar { position: relative; flex: none; }
    .window { position: relative; margin-top: 2px; height: 1616px; border-top: 2px solid #8c8b88; border-radius: 22px; overflow: hidden; display: flex; flex-direction: column; background: #fff; flex: none; }
    .window browser-chrome { flex: none; }
    .shade { position: absolute; left: 150px; right: 150px; bottom: 0; height: 78px; background: linear-gradient(180deg, rgba(0, 0, 0, 0), rgba(0, 0, 0, 0.045) 45%, rgba(0, 0, 0, 0.12)); -webkit-mask-image: linear-gradient(90deg, transparent, #000 130px, #000 calc(100% - 150px), transparent); mask-image: linear-gradient(90deg, transparent, #000 130px, #000 calc(100% - 150px), transparent); }
    app-dock { position: relative; margin: 6px 0 0 215px; flex: none; }
  `;
  render() {
    return html`<div class="desktop">
      <div class="sky"></div>
      <svg class="road" width="2880" height="160" viewBox="0 0 2880 160">
        <path d="M1500 0h1380v160H1950z" fill="#0d0e10"/>
        <path d="M1575 26h80l20 10h-65zM1960 150h75l50 12h-90z" fill="#4b5363"/>
        <path d="M2640 24l240 46v8l-260-50zM2580 24l300 56v8l-320-60z" fill="#4f300f"/>
      </svg>
      <menu-bar></menu-bar>
      <div class="window"><browser-chrome></browser-chrome><user-page></user-page><div class="shade"></div></div>
      <app-dock></app-dock>
    </div>`;
  }
}
